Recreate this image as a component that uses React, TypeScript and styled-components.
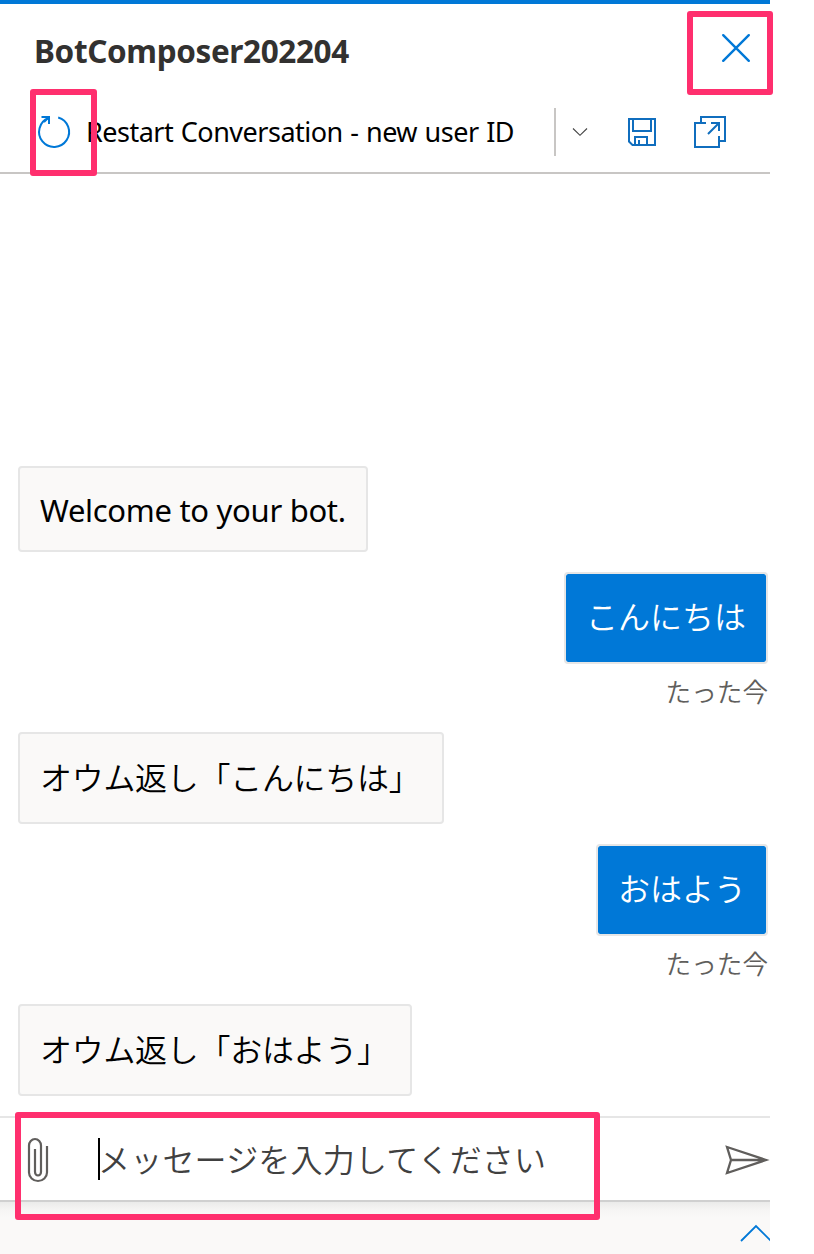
import React from 'react';
import styled, { createGlobalStyle } from 'styled-components';

const GlobalStyle = createGlobalStyle`
  * { box-sizing: border-box; }
  body { margin: 0; background: #fff; overflow: hidden; }
`;

const latin = `'Noto Sans', 'Noto Sans CJK JP', sans-serif`;
const japanese = `'Noto Sans CJK JP', 'Noto Sans', sans-serif`;

const Page = styled.div`
  position: relative;
  width: 814px;
  height: 1254px;
  overflow: hidden;
  background: #fff;
`;

const Panel = styled.main`
  display: flex;
  flex-direction: column;
  width: 770px;
  height: 1254px;
  overflow: hidden;
  border-top: 4px solid #0078d7;
  font-family: ${latin};
  color: #000;
`;

const Header = styled.header`
  display: flex;
  align-items: center;
  justify-content: space-between;
  height: 88px;
  padding: 0 18px 0 34px;
`;

const Title = styled.h1`
  margin: 0;
  padding-top: 5px;
  font-size: 31.5px;
  line-height: 44px;
  font-weight: 700;
  letter-spacing: -0.38px;
  color: #323130;
  white-space: nowrap;
`;

const IconButton = styled.button<{ $w: number; $h: number }>`
  display: flex;
  align-items: center;
  justify-content: center;
  flex: none;
  width: ${(p) => p.$w}px;
  height: ${(p) => p.$h}px;
  padding: 0;
  border: 0;
  background: none;
  svg { display: block; overflow: visible; }
`;

const Toolbar = styled.div`
  display: flex;
  align-items: center;
  height: 82px;
  padding-left: 36px;
  border-bottom: 2px solid #c8c6c4;
`;

const RestartLabel = styled.span`
  width: 427px;
  margin-left: 14px;
  font-size: 27px;
  line-height: 40px;
  letter-spacing: -0.5px;
  word-spacing: 1px;
  white-space: nowrap;
`;

const Divider = styled.span`
  width: 2px;
  height: 48px;
  margin-left: 41px;
  background: #c8c6c4;
`;

const Transcript = styled.section`
  display: flex;
  flex-direction: column;
  justify-content: flex-end;
  gap: 20px;
  flex: none;
  height: 942px;
  padding: 0 2px 20px 18px;
`;

const Message = styled.div<{ $mine?: boolean }>`
  display: flex;
  flex-direction: column;
  align-items: ${(p) => (p.$mine ? 'flex-end' : 'flex-start')};
`;

const Bubble = styled.div<{ $mine?: boolean; $w: number; $h?: number; $latin?: boolean }>`
  width: ${(p) => p.$w}px;
  height: ${(p) => p.$h ?? 92}px;
  padding: 18px 20px;
  border: 2px solid #e6e6e6;
  border-radius: 4px;
  background: ${(p) => (p.$mine ? '#0078d7' : '#faf9f8')};
  background-clip: padding-box;
  color: ${(p) => (p.$mine ? '#fff' : '#000')};
  font-family: ${(p) => (p.$latin ? latin : japanese)};
  font-weight: ${(p) => (p.$latin ? 400 : 350)};
  font-size: ${(p) => (p.$latin ? 31 : 32)}px;
  line-height: ${(p) => (p.$mine ? 47 : 48)}px;
  letter-spacing: ${(p) => (p.$latin ? '-0.3px' : p.$mine ? '0' : '-0.3px')};
  white-space: nowrap;
`;

const Timestamp = styled.time`
  height: 48px;
  padding-top: 9px;
  font-family: ${japanese};
  font-weight: 350;
  font-size: 25.6px;
  line-height: 36px;
  color: #605e5c;
`;

const Composer = styled.div`
  display: flex;
  align-items: center;
  flex: none;
  height: 86px;
  border-top: 2px solid #e6e6e6;
  border-bottom: 2px solid #d0d0d0;
  background: #fff;
`;

const Caret = styled.span`
  flex: none;
  width: 2px;
  height: 42px;
  margin-left: 22px;
  background: #000;
`;

const Placeholder = styled.span`
  flex: 1;
  margin: -3px 0 0 -2px;
  font-family: ${japanese};
  font-weight: 350;
  font-size: 32px;
  line-height: 48px;
  letter-spacing: 0.2px;
  color: #404040;
  white-space: nowrap;
`;

const Footer = styled.footer`
  display: flex;
  justify-content: flex-end;
  height: 52px;
  padding-top: 22px;
  background: linear-gradient(#ebebea, #f6f5f4 8px, #faf9f8 16px);
`;

const Highlight = styled.div<{ $x: number; $y: number; $w: number; $h: number }>`
  position: absolute;
  left: ${(p) => p.$x}px;
  top: ${(p) => p.$y}px;
  width: ${(p) => p.$w}px;
  height: ${(p) => p.$h}px;
  border: 6px solid #ff2f6e;
  border-radius: 3px;
  pointer-events: none;
`;

export default function App() {
  return (
    <Page>
      <GlobalStyle />
      <Panel>
        <Header>
          <Title>BotComposer202204</Title>
          <IconButton $w={32} $h={32} aria-label="Close">
            <svg width="32" height="32" viewBox="0 0 32 32" fill="none" stroke="#0078d7" strokeWidth="2.4" strokeLinecap="round">
              <path d="M3.2 3.2 28.8 28.8M28.8 3.2 3.2 28.8" />
            </svg>
          </IconButton>
        </Header>
        <Toolbar>
          <IconButton $w={36} $h={36} aria-label="Restart">
            <svg width="36" height="36" viewBox="0 0 36 36" fill="none" stroke="#0078d7" strokeWidth="2">
              <path d="M22.2 3.5A15 15 0 1 1 12.5 4" />
              <path d="M5.5 3H13V10M12.8 3.4 8 8" />
            </svg>
          </IconButton>
          <RestartLabel>Restart Conversation - new user ID</RestartLabel>
          <Divider />
          <IconButton $w={48} $h={48} aria-label="Restart options">
            <svg width="16" height="10" viewBox="0 0 16 10" fill="none" stroke="#444" strokeWidth="1.1">
              <path d="M1 1.5 8 8.3 15 1.5" />
            </svg>
          </IconButton>
          <IconButton $w={76} $h={48} aria-label="Save transcript">
            <svg width="28" height="28" viewBox="0 0 28 28" fill="none" stroke="#106ebe" strokeWidth="2">
              <path d="M1 1H27V27H4.5L1 23.5ZM5 1V13H23V1M7 27V19H19V27M11 22V27" />
            </svg>
          </IconButton>
          <IconButton $w={60} $h={48} aria-label="Open in new window">
            <svg width="32" height="32" viewBox="0 0 32 32" fill="none" stroke="#106ebe" strokeWidth="2">
              <path d="M7 7V1H31V25H25M12 7H1V31H25V20M25 15V7H17M25 7 14 18" />
            </svg>
          </IconButton>
        </Toolbar>
        <Transcript>
          <Message><Bubble $latin $w={350} $h={86}>Welcome to your bot.</Bubble></Message>
          <Message $mine>
            <Bubble $mine $w={204}>こんにちは</Bubble>
            <Timestamp>たった今</Timestamp>
          </Message>
          <Message><Bubble $w={426}>オウム返し「こんにちは」</Bubble></Message>
          <Message $mine>
            <Bubble $mine $w={172}>おはよう</Bubble>
            <Timestamp>たった今</Timestamp>
          </Message>
          <Message><Bubble $w={394}>オウム返し「おはよう」</Bubble></Message>
        </Transcript>
        <Composer>
          <IconButton $w={76} $h={80} aria-label="Attach file">
            <svg width="20" height="44" viewBox="0 -1 20 44" fill="none" stroke="#605e5c" strokeWidth="2.2">
              <path d="M19 8V34.5A9 8.5 0 0 1 1 34.5V7.5A6 6.5 0 0 1 13 7.5V34A3 3.5 0 0 1 7 34V11" />
            </svg>
          </IconButton>
          <Caret />
          <Placeholder>メッセージを入力してください</Placeholder>
          <IconButton $w={46} $h={80} aria-label="Send">
            <svg width="44" height="30" viewBox="0 -1 44 30" fill="none" stroke="#605e5c" strokeWidth="2.3">
              <path d="M2 2 41 15 2 28 6 15ZM6 15H40" />
            </svg>
          </IconButton>
        </Composer>
        <Footer>
          <IconButton $w={30} $h={18} aria-label="Expand panel">
            <svg width="30" height="18" viewBox="0 0 30 18" fill="none" stroke="#0078d7" strokeWidth="1.8">
              <path d="M1 17 16 2 31 17" />
            </svg>
          </IconButton>
        </Footer>
      </Panel>
      <Highlight $x={687} $y={11} $w={86} $h={84} />
      <Highlight $x={30} $y={89} $w={67} $h={87} />
      <Highlight $x={15} $y={1112} $w={585} $h={108} />
    </Page>
  );
}
